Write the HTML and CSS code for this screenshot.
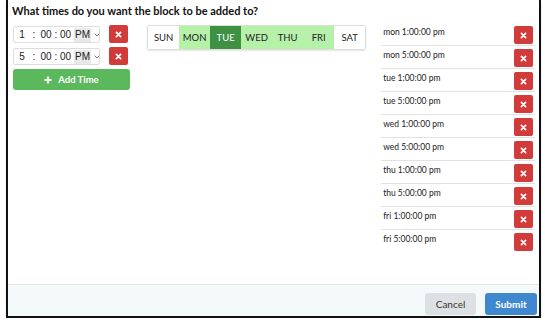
FILE: index.html
```html
<!DOCTYPE html>
<html lang="en">
<head>
  <title>Block times</title>
  <meta charset="UTF-8"/>
  <meta name="viewport" content="width=device-width,initial-scale=1"/>
  <link rel="stylesheet" href="styles.css">
</head>
<body>
<div class="modal">
  <div class="modal-body">
    <h1 class="question">What times do you want the block to be added to?</h1>
    <div class="columns">
      <div class="times">
        <div class="time-row">
          <div class="time-input">
            <span class="hour">1</span><span class="sep">:</span><span class="num">00</span><span class="sep sep2">:</span><span class="num sec">00</span><span class="ampm">PM</span><svg class="caret" viewBox="0 0 6 4" width="6" height="4"><path d="M0.7 0.7L3 3L5.3 0.7" fill="none" stroke="#666" stroke-width="0.9"/></svg>
          </div>
          <button type="button" class="del"><svg viewBox="0 0 10 10" width="7" height="7"><path d="M2 2L8 8M8 2L2 8" stroke="#fff" stroke-width="2.4" stroke-linecap="round"/></svg></button>
        </div>
        <div class="time-row">
          <div class="time-input">
            <span class="hour">5</span><span class="sep">:</span><span class="num">00</span><span class="sep sep2">:</span><span class="num sec">00</span><span class="ampm">PM</span><svg class="caret" viewBox="0 0 6 4" width="6" height="4"><path d="M0.7 0.7L3 3L5.3 0.7" fill="none" stroke="#666" stroke-width="0.9"/></svg>
          </div>
          <button type="button" class="del"><svg viewBox="0 0 10 10" width="7" height="7"><path d="M2 2L8 8M8 2L2 8" stroke="#fff" stroke-width="2.4" stroke-linecap="round"/></svg></button>
        </div>
        <button type="button" class="add-time"><svg viewBox="0 0 10 10" width="8" height="8"><path d="M5 0.5V9.5M0.5 5H9.5" stroke="#fff" stroke-width="2.4"/></svg>Add Time</button>
      </div>

      <div class="days">
        <span class="day">SUN</span>
        <span class="day on">MON</span>
        <span class="day active">TUE</span>
        <span class="day on">WED</span>
        <span class="day on">THU</span>
        <span class="day on">FRI</span>
        <span class="day">SAT</span>
      </div>

      <ul class="slots">
        <li><span>mon 1:00:00 pm</span><button type="button" class="del"><svg viewBox="0 0 10 10" width="7" height="7"><path d="M2 2L8 8M8 2L2 8" stroke="#fff" stroke-width="2.4" stroke-linecap="round"/></svg></button></li>
        <li><span>mon 5:00:00 pm</span><button type="button" class="del"><svg viewBox="0 0 10 10" width="7" height="7"><path d="M2 2L8 8M8 2L2 8" stroke="#fff" stroke-width="2.4" stroke-linecap="round"/></svg></button></li>
        <li><span>tue 1:00:00 pm</span><button type="button" class="del"><svg viewBox="0 0 10 10" width="7" height="7"><path d="M2 2L8 8M8 2L2 8" stroke="#fff" stroke-width="2.4" stroke-linecap="round"/></svg></button></li>
        <li><span>tue 5:00:00 pm</span><button type="button" class="del"><svg viewBox="0 0 10 10" width="7" height="7"><path d="M2 2L8 8M8 2L2 8" stroke="#fff" stroke-width="2.4" stroke-linecap="round"/></svg></button></li>
        <li><span>wed 1:00:00 pm</span><button type="button" class="del"><svg viewBox="0 0 10 10" width="7" height="7"><path d="M2 2L8 8M8 2L2 8" stroke="#fff" stroke-width="2.4" stroke-linecap="round"/></svg></button></li>
        <li><span>wed 5:00:00 pm</span><button type="button" class="del"><svg viewBox="0 0 10 10" width="7" height="7"><path d="M2 2L8 8M8 2L2 8" stroke="#fff" stroke-width="2.4" stroke-linecap="round"/></svg></button></li>
        <li><span>thu 1:00:00 pm</span><button type="button" class="del"><svg viewBox="0 0 10 10" width="7" height="7"><path d="M2 2L8 8M8 2L2 8" stroke="#fff" stroke-width="2.4" stroke-linecap="round"/></svg></button></li>
        <li><span>thu 5:00:00 pm</span><button type="button" class="del"><svg viewBox="0 0 10 10" width="7" height="7"><path d="M2 2L8 8M8 2L2 8" stroke="#fff" stroke-width="2.4" stroke-linecap="round"/></svg></button></li>
        <li><span>fri 1:00:00 pm</span><button type="button" class="del"><svg viewBox="0 0 10 10" width="7" height="7"><path d="M2 2L8 8M8 2L2 8" stroke="#fff" stroke-width="2.4" stroke-linecap="round"/></svg></button></li>
        <li><span>fri 5:00:00 pm</span><button type="button" class="del"><svg viewBox="0 0 10 10" width="7" height="7"><path d="M2 2L8 8M8 2L2 8" stroke="#fff" stroke-width="2.4" stroke-linecap="round"/></svg></button></li>
      </ul>
    </div>
  </div>
  <div class="modal-footer">
    <button type="button" class="btn cancel">Cancel</button>
    <button type="button" class="btn submit">Submit</button>
  </div>
</div>
</body>
</html>
```

FILE: styles.css
```css
body {
  margin: 0;
  background: #fff;
  font-family: Lato, "Liberation Sans", Arial, sans-serif;
  color: #222;
}

.modal {
  margin: 0 4px 0 6px;
  height: 316px;
  border: 2px solid #111;
  border-top: none;
  display: flex;
  flex-direction: column;
  box-shadow: 0 2px 1px #bbb;
}

.modal-body {
  flex: 1;
  padding: 4px 4px 0 4px;
}

.question {
  margin: 0;
  font-size: 11px;
  line-height: 14px;
  font-weight: bold;
  color: #111;
}

.columns {
  display: flex;
  align-items: flex-start;
  margin-top: 7px;
}

.times {
  width: 118px;
  margin-left: 1px;
}

.time-row {
  display: flex;
  align-items: flex-start;
  margin-bottom: 4px;
}

.time-input {
  display: flex;
  align-items: center;
  width: 85px;
  height: 15px;
  margin-top: 1px;
  border: 1px solid #ddd;
  border-radius: 2px;
  font-family: "Liberation Sans", Arial, sans-serif;
  font-size: 10px;
  color: #222;
}

.time-input span {
  flex: none;
  text-align: center;
}

.time-input .hour {
  width: 12px;
  margin-left: 2px;
}

.time-input .sep {
  width: 12px;
}

.time-input .num {
  width: 12px;
}

.time-input .sep2 {
  width: 8px;
}

.time-input .sec {
  width: 11px;
}

.time-input .ampm {
  margin-left: 3px;
  padding: 0 1px;
  background: #e9e9e9;
  line-height: 14px;
}

.time-input .caret {
  flex: none;
  margin-left: 3px;
}

.del {
  width: 19px;
  height: 18px;
  padding: 0;
  border: none;
  border-radius: 2px;
  background: #d13b3a;
  display: flex;
  align-items: center;
  justify-content: center;
}

.time-row .del {
  margin-left: 9px;
}

.add-time {
  display: flex;
  align-items: center;
  justify-content: center;
  gap: 6px;
  width: 117px;
  height: 21px;
  margin-top: 1px;
  padding: 0;
  border: none;
  border-radius: 3px;
  background: #5cb85c;
  color: #fff;
  font-family: Lato, sans-serif;
  font-size: 9.5px;
  font-weight: bold;
}

.days {
  display: flex;
  margin-left: 17px;
  border: 1px solid #ddd;
  border-radius: 2px;
  box-shadow: 0 1px 2px #e4e4e4;
}

.day {
  width: 31px;
  height: 23px;
  line-height: 23px;
  text-align: center;
  font-size: 9.5px;
  color: #222;
  background: #fff;
}

.day.on {
  background: #b6f1aa;
}

.day.active {
  background: #3e9143;
  color: #fff;
}

.slots {
  list-style: none;
  margin: -2px 0 0 15px;
  padding: 0;
  width: 155px;
}

.slots li {
  display: flex;
  justify-content: space-between;
  align-items: flex-start;
  height: 22px;
  border-bottom: 1px solid #e2e2e2;
}

.slots li:last-child {
  border-bottom: none;
}

.slots span {
  margin: 3px 0 0 2px;
  font-size: 8.5px;
  line-height: 12px;
  color: #222;
}

.slots .del {
  margin-top: 3px;
  margin-right: 2px;
}

.modal-footer {
  display: flex;
  justify-content: flex-end;
  gap: 9px;
  height: 32px;
  padding: 8px 2px 0 0;
  box-sizing: border-box;
  background: #f4f9f9;
  border-top: 1px solid #e4e6e6;
}

.btn {
  height: 22px;
  padding: 0;
  border: none;
  border-radius: 3px;
  font-family: Lato, sans-serif;
  font-size: 10px;
}

.cancel {
  width: 51px;
  background: #dde1e3;
  color: #333;
}

.submit {
  width: 52px;
  background: #3f88d0;
  color: #fff;
  font-weight: bold;
}
```
